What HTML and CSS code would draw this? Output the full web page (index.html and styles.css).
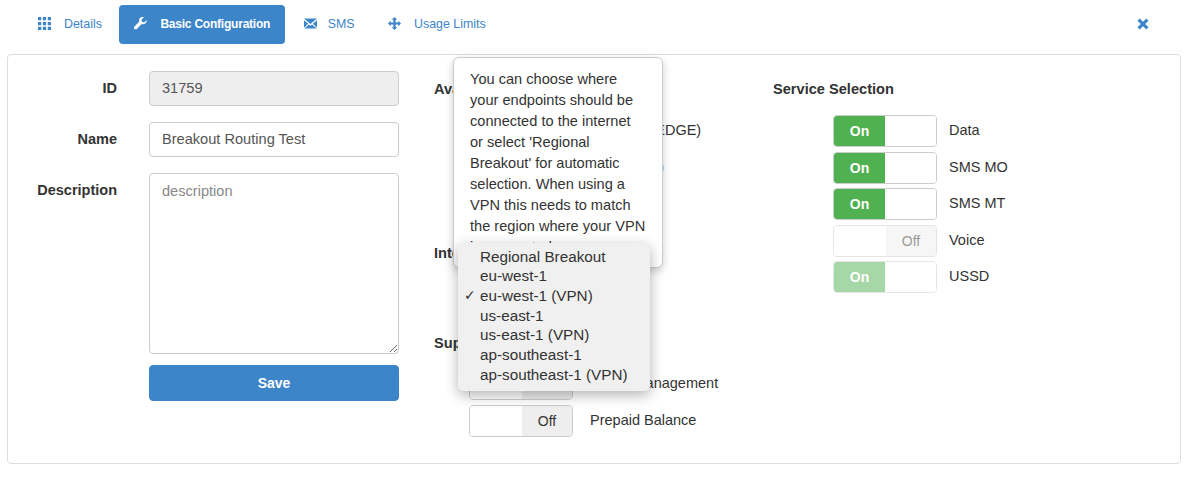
FILE: index.html
```html
<!DOCTYPE html>
<html lang="en">
<head>
<meta charset="utf-8">
<title>Basic Configuration</title>
<link rel="stylesheet" href="styles.css">
</head>
<body>
<nav class="tabs">
  <a class="tab"><svg class="ico" viewBox="0 0 12 12"><path d="M0 0h3v3H0zM4.500 0h3v3h-3zM9 0h3v3H9zM0 4.500h3v3H0zM4.500 4.500h3v3h-3zM9 4.500h3v3H9zM0 9h3v3H0zM4.500 9h3v3h-3zM9 9h3v3H9z"/></svg><span>Details</span></a>
  <a class="tab active"><svg class="ico" viewBox="0 0 14 14"><path d="M13.600 3.200 11 5.800 8.600 5.200 8 2.900 10.700.4C8.600-.4 6.400.4 5.700 2.400c-.3.9-.2 1.800 0 2.500L.5 10.300c-.7.7-.7 1.800 0 2.500s1.800.7 2.500 0l5.300-5.300c2.600.9 5.900-1 5.300-4.300z"/></svg><span>Basic Configuration</span></a>
  <a class="tab tab-tight"><svg class="ico" viewBox="0 0 14 12"><path d="M0 .5h14L7 6.500zM0 2.500v8l4.500-4.200zM14 2.500v8L9.500 6.300zM5.400 7.100 7 8.500l1.600-1.400 5 4.400H.4z"/></svg><span>SMS</span></a>
  <a class="tab"><svg class="ico" viewBox="0 0 14 14"><path d="M7 0l3 3H8.200v2.800H11V4l3 3-3 3V8.200H8.200V11H10l-3 3-3-3h1.800V8.200H3V10L0 7l3-3v1.800h2.800V3H4z"/></svg><span>Usage Limits</span></a>
  <a class="close"><svg class="ico-close" viewBox="0 0 12 12"><path d="M2.700.5 6 3.800 9.300.5l2.200 2.200L8.200 6l3.300 3.300-2.200 2.200L6 8.200l-3.300 3.300L.5 9.300 3.800 6 .5 2.700z"/></svg></a>
</nav>

<main class="panel">
  <section class="col-form">
    <div class="field"><label>ID</label><input class="input" value="31759" disabled></div>
    <div class="field"><label>Name</label><input class="input" value="Breakout Routing Test"></div>
    <div class="field"><label>Description</label><textarea class="input area" placeholder="description"></textarea></div>
    <div class="field save-row"><span></span><button class="save">Save</button></div>
  </section>

  <section class="col-mid">
    <h3 class="heading">Available Networks</h3>
    <div class="rows">
      <div class="row"><span class="toggle is-on"><b>On</b><i></i></span><span class="row-label">2G (GSM/EDGE)</span></div>
      <div class="row"><span class="toggle is-on"><b>On</b><i></i></span><span class="row-label">3G (UMTS)</span></div>
      <div class="row"><span class="toggle is-on"><b>On</b><i></i></span><span class="row-label">4G (LTE)</span></div>
    </div>
    <h3 class="heading h-internet">Internet Breakout</h3>
    <h3 class="heading h-supp">Supplementary Services</h3>
    <div class="rows rows-supp">
      <div class="row"><span class="toggle is-off"><i></i><b>Off</b></span><span class="row-label">Quota Management</span></div>
      <div class="row"><span class="toggle is-off"><i></i><b>Off</b></span><span class="row-label">Prepaid Balance</span></div>
    </div>
  </section>

  <section class="col-service">
    <h3 class="heading">Service Selection</h3>
    <div class="rows">
      <div class="row"><span class="toggle is-on"><b>On</b><i></i></span><span class="row-label">Data</span></div>
      <div class="row"><span class="toggle is-on"><b>On</b><i></i></span><span class="row-label">SMS MO</span></div>
      <div class="row"><span class="toggle is-on"><b>On</b><i></i></span><span class="row-label">SMS MT</span></div>
      <div class="row"><span class="toggle is-off dim"><i></i><b>Off</b></span><span class="row-label">Voice</span></div>
      <div class="row"><span class="toggle is-on dim"><b>On</b><i></i></span><span class="row-label">USSD</span></div>
    </div>
  </section>

  <div class="tooltip">You can choose where your endpoints should be connected to the internet or select 'Regional<br>Breakout' for automatic selection. When using a VPN this needs to match the region where your VPN is connected.</div>
  <ul class="menu">
    <li>Regional Breakout</li>
    <li>eu-west-1</li>
    <li class="checked">eu-west-1 (VPN)</li>
    <li>us-east-1</li>
    <li>us-east-1 (VPN)</li>
    <li>ap-southeast-1</li>
    <li>ap-southeast-1 (VPN)</li>
  </ul>
</main>
</body>
</html>
```
FILE: styles.css
```css
* { box-sizing: border-box; }
html, body { margin: 0; height: 100%; overflow: hidden; }
body {
  background: #fff;
  color: #333;
  font-family: "Liberation Sans", Arial, sans-serif;
  font-size: 14.5px;
  line-height: 20px;
}
.tabs {
  display: flex;
  align-items: center;
  gap: 3.5px;
  height: 39px;
  margin: 5px 0 10px;
  padding-left: 23px;
}
.tab {
  display: flex;
  align-items: center;
  height: 39px;
  padding: 0 15px 2px;
  gap: 13px;
  color: #3d85c9;
  font-size: 12.4px;
  border-radius: 4px;
}
.tab.active {
  background: #3d85c9;
  color: #fff;
  font-size: 12px;
  font-weight: bold;
  letter-spacing: -.22px;
  margin-left: -1px;
}
.tab-tight .ico { margin-right: -2px; }
.ico { width: 13px; height: 13px; fill: currentColor; flex: none; }
.close { margin-left: auto; margin-right: 43px; padding-bottom: 2px; color: #3d85c9; display: flex; }
.ico-close { width: 12px; height: 12px; fill: currentColor; }

.panel {
  position: relative;
  display: flex;
  height: 410px;
  margin: 0 11px 0 7px;
  border: 1px solid #ddd;
  border-radius: 4px;
  padding: 16px 0 0;
}
.col-form {
  width: 391px;
  display: flex;
  flex-direction: column;
  gap: 16px;
}
.field {
  display: grid;
  grid-template-columns: 109px 250px;
  column-gap: 32px;
}
.field label {
  text-align: right;
  font-weight: bold;
  padding-top: 7px;
}
.input {
  display: block;
  width: 100%;
  height: 35px;
  padding: 5px 12px 7px;
  border: 1px solid #ccc;
  border-radius: 4px;
  background: #fff;
  color: #555;
  font: 14.6px/20px "Liberation Sans", Arial, sans-serif;
}
.input:disabled { background: #eee; opacity: 1; }
.area { height: 181px; padding-top: 7px; resize: vertical; }
.area::placeholder { color: #888; }
.save-row { margin-top: -5px; }
.save {
  height: 36px;
  border: 1px solid #3d85c9;
  border-radius: 4px;
  background: #3d85c9;
  color: #fff;
  font: bold 14px/20px "Liberation Sans", Arial, sans-serif;
}
.col-mid { width: 339px; margin-left: 35px; }
.col-service { flex: 1; }
.heading {
  margin: 8px 0 0;
  font-size: 14.6px;
  line-height: 20px;
  font-weight: bold;
}
.rows {
  display: flex;
  flex-direction: column;
  gap: 4.5px;
  margin: 16px 0 0 60px;
}
.col-mid .rows { margin-left: 35px; }
.h-internet { margin-top: 23px; }
.h-supp { margin-top: 70px; }
.col-mid .rows-supp { margin-top: 15px; }
.row {
  display: flex;
  align-items: center;
  gap: 17px;
  height: 32px;
}
.col-service .row { gap: 12px; }
.row-label { margin-top: -2px; }
.toggle {
  display: flex;
  width: 104px;
  height: 32px;
  border: 1px solid #ccc;
  border-radius: 4px;
  overflow: hidden;
  flex: none;
  font-size: 14px;
}
.toggle b, .toggle i { display: block; line-height: 30px; text-align: center; font-style: normal; font-weight: normal; }
.toggle i { flex: 1; background: #fff; }
.is-on b { width: 51px; background: #4fb14f; color: #fff; font-weight: bold; }
.is-off b { width: 50px; background: #eee; color: #333; }
.dim { opacity: .5; }

.tooltip {
  position: absolute;
  left: 445px;
  top: 2px;
  width: 210px;
  height: 211px;
  padding: 11px 16px;
  background: #fff;
  border: 1px solid #ccc;
  border-radius: 6px;
  box-shadow: 0 3px 8px rgba(0,0,0,.2);
  font-size: 14.6px;
  line-height: 21px;
  overflow: hidden;
}
.menu {
  position: absolute;
  left: 450px;
  top: 188px;
  width: 192px;
  height: 148px;
  margin: 0;
  padding: 3.5px 0;
  list-style: none;
  background: #f0f0f0;
  border-radius: 5px;
  box-shadow: 0 4px 14px rgba(0,0,0,.3);
  font-size: 15.25px;
  line-height: 19.7px;
}
.menu li { padding-left: 22px; position: relative; }
.checked::before { content: "\2713"; position: absolute; left: 6px; font-family: "DejaVu Sans", sans-serif; font-size: 14px; font-weight: bold; }
```
